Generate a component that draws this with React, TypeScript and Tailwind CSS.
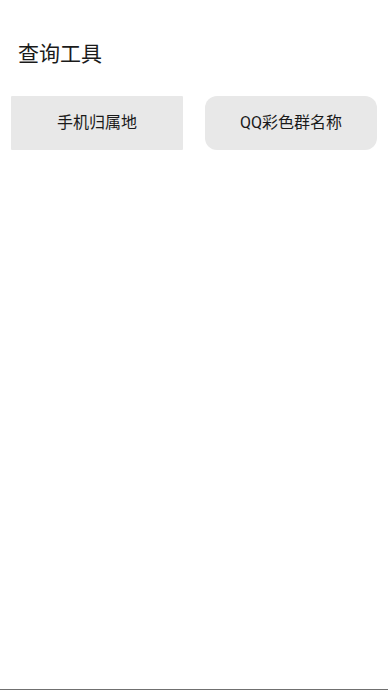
const TOOLS = [
  { name: "手机归属地", rounded: "rounded-[1px]" },
  { name: "QQ彩色群名称", rounded: "rounded-[12px]" },
];

export default function App() {
  return (
    <div
      className="h-[690px] bg-white flex flex-col border-b border-[#707070]"
      style={{ fontFamily: 'Roboto, "Noto Sans CJK SC", sans-serif' }}
    >
      <h1 className="pt-[40px] pl-[18px] text-[21px] leading-[28px] text-[#1a1a1a]">
        查询工具
      </h1>

      <div className="mt-[28px] px-[11px] grid grid-cols-2 gap-[22px]">
        {TOOLS.map(tool => (
          <button
            key={tool.name}
            className={`h-[54px] bg-[#e8e8e8] text-[16px] text-[#1a1a1a] flex items-center justify-center ${tool.rounded}`}
          >
            {tool.name}
          </button>
        ))}
      </div>
    </div>
  );
}
